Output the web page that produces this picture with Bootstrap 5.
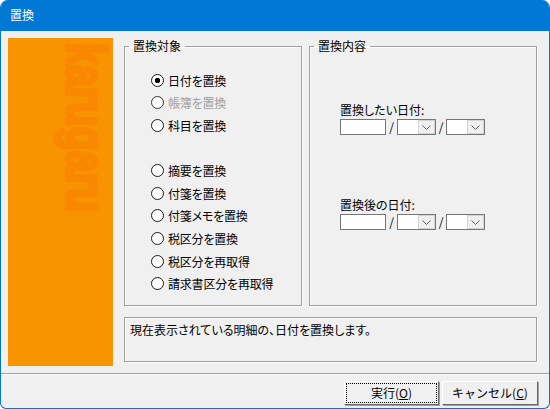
<!DOCTYPE html>
<html lang="ja">
<head>
  <meta charset="UTF-8" />
  <title>置換</title>
  <link rel="stylesheet" href="https://cdn.jsdelivr.net/npm/bootstrap@5.3.0/dist/css/bootstrap.min.css" />
  <style>
    html, body { width: 550px; height: 409px; overflow: hidden; background: #fff; }
    body { font: 12px/16px "Noto Sans CJK JP", "Liberation Sans", sans-serif; font-feature-settings: "palt"; color: #000; }
    .dlg-window { width: 550px; height: 409px; background: #f0f0f0; border: 1px solid #0078d4; border-top: 0; border-radius: 8px 8px 6px 6px; overflow: hidden; }
    .dlg-title { height: 31px; flex: none; margin: 0 -1px; background: #0078d4; color: #fff; padding: 7px 0 0 10px; }
    .dlg-main { padding: 7px 12px 0 7px; height: 342px; flex: none; }
    .dlg-side { width: 105px; height: 328px; background: #f89400; flex: none; }
    .dlg-side svg { display: block; overflow: visible; }
    .dlg-group { border: 1px solid #a0a0a0; box-shadow: inset 1px 1px 0 #fff, 1px 1px 0 #fff; margin: 0; min-width: 0; padding: 0; }
    .dlg-group legend { float: none; width: auto; font-size: 12px; line-height: 16px; margin: 0 0 0 4px; padding: 0 4px; }
    .dlg-left { width: 178px; height: 268px; }
    .dlg-right { width: 228px; height: 268px; }
    .radio-list { padding: 15px 0 0 26px; }
    .radio-row { height: 22.6px; display: flex; align-items: center; gap: 4px; margin: 0; letter-spacing: -.2px; line-height: 15px; }
    .radio-row.is-off { color: #a0a0a0; }
    .radio-spacer { height: 22.6px; }
    .radio-row .form-check-input { width: 13px; height: 13px; margin: 0; flex: none; float: none; background: #fff; border: 1px solid #1a1a1a; box-shadow: none; }
    .radio-row .form-check-input:checked { background: #fff radial-gradient(circle, #000 0 2.5px, transparent 3px); border-color: #1a1a1a; }
    .radio-row .form-check-input:disabled { opacity: 1; border-color: #333; }
    .date-block { padding-left: 30px; }
    .date-block.first { padding-top: 48px; }
    .date-block.second { padding-top: 62px; }
    .date-fields { display: flex; align-items: center; height: 16px; margin-top: 1px; }
    .date-box { height: 16px; border: 1px solid #767676; background: #fff; display: flex; justify-content: flex-end; flex: none; }
    .date-box.year { width: 46px; }
    .date-box.pick { width: 39px; }
    .date-sep { width: 11px; text-align: center; }
    .date-sep.wide { width: 10px; }
    .date-arrow { width: 17px; height: 14px; background: #f0f0f0; border: 1px solid #d4d4d4; display: flex; align-items: center; justify-content: center; }
    .dlg-desc { margin-top: 11px; height: 45px; border: 1px solid #a0a0a0; box-shadow: inset 1px 1px 0 #fff, 1px 1px 0 #fff; padding: 4px 0 0 5px; }
    .dlg-foot { border-top: 1px solid #a0a0a0; box-shadow: inset 0 1px 0 #fff; height: 35px; flex: none; margin: 0 -1px; padding: 7px 12px 0 0; }
    .dlg-btn { height: 24px; padding: 0; border-radius: 0; font-size: 12px; line-height: 16px; color: #000; background: #f0f0f0; border: 1px solid; border-color: #fff #696969 #696969 #fff; box-shadow: 1px 1px 0 #a0a0a0; }
    .dlg-btn:hover, .dlg-btn:focus { background: #f0f0f0; color: #000; border-color: #fff #696969 #696969 #fff; }
    .dlg-btn.run { width: 95px; outline: 1px dotted #000; outline-offset: -3px; }
    .dlg-btn.cancel { width: 96px; margin-left: 3px; }
  </style>
</head>
<body>
  <div class="dlg-window d-flex flex-column">
    <div class="dlg-title">置換</div>

    <div class="dlg-main d-flex">
      <!-- 左の帯 -->
      <div class="dlg-side">
        <svg width="125" height="328" aria-hidden="true">
          <text transform="translate(59 5) rotate(90)" x="0" y="0" textLength="169" lengthAdjust="spacingAndGlyphs" font-family="Liberation Sans" font-weight="700" font-size="56" fill="#f98800" stroke="#f98800" stroke-width="3.5">karugaru</text>
        </svg>
      </div>

      <div class="ms-auto">
        <div class="d-flex justify-content-between" style="width:413px">
          <fieldset class="dlg-group dlg-left">
            <legend>置換対象</legend>
            <div class="radio-list">
              <label class="radio-row"><input class="form-check-input" type="radio" name="target" checked />日付を置換</label>
              <label class="radio-row is-off"><input class="form-check-input" type="radio" name="target" disabled />帳簿を置換</label>
              <label class="radio-row"><input class="form-check-input" type="radio" name="target" />科目を置換</label>
              <div class="radio-spacer"></div>
              <label class="radio-row"><input class="form-check-input" type="radio" name="target" />摘要を置換</label>
              <label class="radio-row"><input class="form-check-input" type="radio" name="target" />付箋を置換</label>
              <label class="radio-row"><input class="form-check-input" type="radio" name="target" />付箋メモを置換</label>
              <label class="radio-row"><input class="form-check-input" type="radio" name="target" />税区分を置換</label>
              <label class="radio-row"><input class="form-check-input" type="radio" name="target" />税区分を再取得</label>
              <label class="radio-row"><input class="form-check-input" type="radio" name="target" />請求書区分を再取得</label>
            </div>
          </fieldset>

          <fieldset class="dlg-group dlg-right">
            <legend>置換内容</legend>
            <div class="date-block first">
              <div>置換したい日付:</div>
              <div class="date-fields">
                <div class="date-box year"></div><span class="date-sep">/</span>
                <div class="date-box pick"><span class="date-arrow"><svg width="9" height="5" viewBox="0 0 9 5"><path d="M.5.5 4.5 4.5 8.5.5" fill="none" stroke="#606060"/></svg></span></div><span class="date-sep wide">/</span>
                <div class="date-box pick"><span class="date-arrow"><svg width="9" height="5" viewBox="0 0 9 5"><path d="M.5.5 4.5 4.5 8.5.5" fill="none" stroke="#606060"/></svg></span></div>
              </div>
            </div>
            <div class="date-block second">
              <div>置換後の日付:</div>
              <div class="date-fields">
                <div class="date-box year"></div><span class="date-sep">/</span>
                <div class="date-box pick"><span class="date-arrow"><svg width="9" height="5" viewBox="0 0 9 5"><path d="M.5.5 4.5 4.5 8.5.5" fill="none" stroke="#606060"/></svg></span></div><span class="date-sep wide">/</span>
                <div class="date-box pick"><span class="date-arrow"><svg width="9" height="5" viewBox="0 0 9 5"><path d="M.5.5 4.5 4.5 8.5.5" fill="none" stroke="#606060"/></svg></span></div>
              </div>
            </div>
          </fieldset>
        </div>
        <div class="dlg-desc">現在表示されている明細の、日付を置換します。</div>
      </div>
    </div>

    <div class="dlg-foot d-flex justify-content-end align-items-start">
      <button type="button" class="btn dlg-btn run">実行(<u>O</u>)</button>
      <button type="button" class="btn dlg-btn cancel">キャンセル(<u>C</u>)</button>
    </div>
  </div>
  <script src="https://cdn.jsdelivr.net/npm/bootstrap@5.3.0/dist/js/bootstrap.bundle.min.js"></script>
</body>
</html>
